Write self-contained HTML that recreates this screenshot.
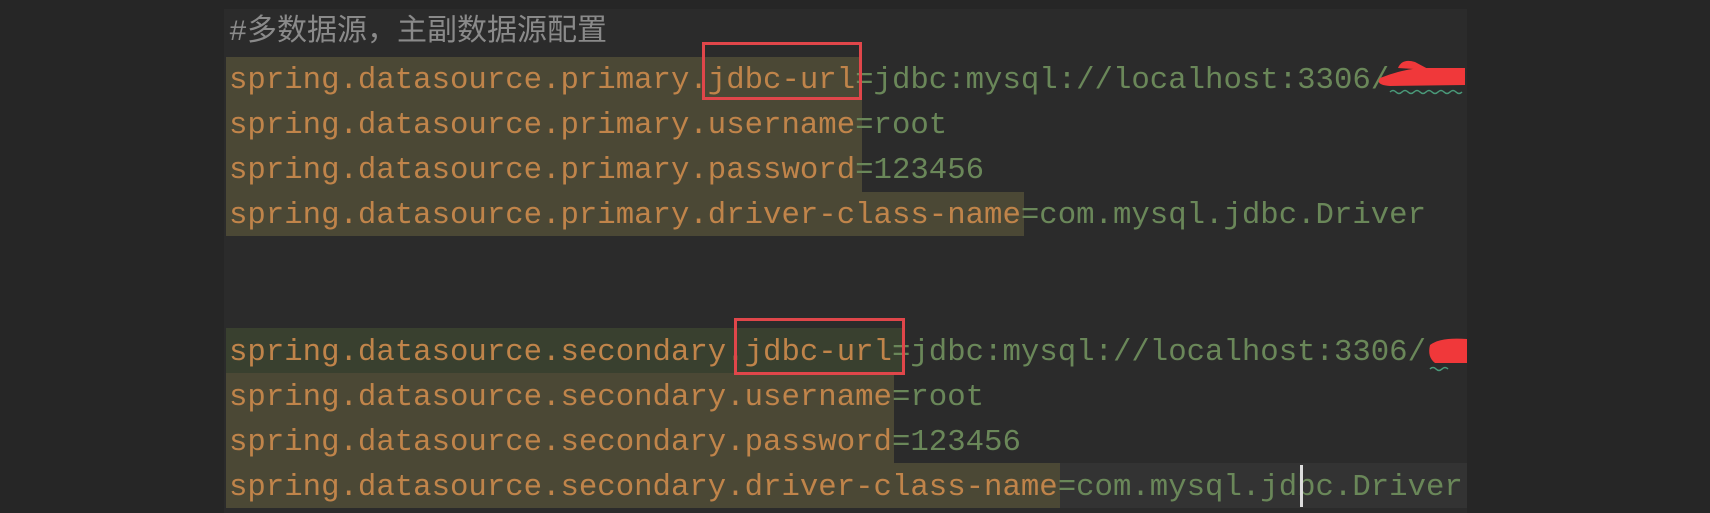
<!DOCTYPE html>
<html><head><meta charset="utf-8"><style>
body{margin:0;width:1710px;height:513px;background:#262626;overflow:hidden;position:relative}
.panel{position:absolute;left:224px;top:9px;width:1243px;height:504px;background:#2b2b2b}
.hl{position:absolute;background:#4b4835}
.l{position:absolute;left:229px;font-family:"Liberation Mono",monospace;font-size:30.7px;line-height:45px;height:45px;white-space:pre;color:#6a8759}
.k{color:#c0844a}
.c{position:absolute;left:229px;top:13px;font-family:"Liberation Mono","Noto Sans CJK SC",monospace;font-size:30px;color:#8a8a8a;line-height:40px}
.box{position:absolute;border:3px solid #e0464a;box-sizing:border-box}
</style></head><body>
<div class="panel"></div>
<div class="hl" style="left:226px;top:57px;width:636px;height:135px"></div>
<div class="hl" style="left:226px;top:192px;width:798px;height:44px"></div>
<div class="hl" style="left:226px;top:328px;width:676px;height:45px;background:#39402f"></div>
<div class="hl" style="left:226px;top:373px;width:668px;height:90px"></div>
<div class="hl" style="left:226px;top:463px;width:1241px;height:45px;background:#333333"></div>
<div class="hl" style="left:226px;top:463px;width:834px;height:45px"></div>
<div class="c">#多数据源，主副数据源配置</div>
<div class="l" style="top:58px"><span class="k">spring.datasource.primary.jdbc-url</span>=jdbc:mysql://localhost:3306/</div>
<div class="l" style="top:103px"><span class="k">spring.datasource.primary.username</span>=root</div>
<div class="l" style="top:148px"><span class="k">spring.datasource.primary.password</span>=123456</div>
<div class="l" style="top:193px"><span class="k">spring.datasource.primary.driver-class-name</span>=com.mysql.jdbc.Driver</div>
<div class="l" style="top:330px"><span class="k">spring.datasource.secondary.jdbc-url</span>=jdbc:mysql://localhost:3306/</div>
<div class="l" style="top:375px"><span class="k">spring.datasource.secondary.username</span>=root</div>
<div class="l" style="top:420px"><span class="k">spring.datasource.secondary.password</span>=123456</div>
<div class="l" style="top:465px"><span class="k">spring.datasource.secondary.driver-class-name</span>=com.mysql.jdbc.Driver</div>
<div style="position:absolute;left:1300px;top:465px;width:3px;height:42px;background:#ddd"></div>
<div class="box" style="left:702px;top:42px;width:160px;height:58px"></div>
<div class="box" style="left:734px;top:318px;width:171px;height:57px"></div>
<svg style="position:absolute;left:1360px;top:50px" width="110" height="45"><path d="M20 28 Q40 20 60 18 L105 18 L105 35 L30 36 Q15 35 20 28Z M38 18 Q42 8 55 12 L70 20Z" fill="#f0383a"/><path d="M30 42 q3-3 6 0 t6 0 t6 0 t6 0 t6 0 t6 0 t6 0 t6 0 t6 0 t6 0 t6 0 t6 0" stroke="#4a9a7a" fill="none" stroke-width="1.5"/></svg>
<svg style="position:absolute;left:1425px;top:333px" width="45" height="40"><path d="M5 12 Q15 4 42 6 L42 30 L10 30 Q2 24 5 12Z" fill="#f0383a"/><path d="M5 36 q3-3 6 0 t6 0 t6 0" stroke="#4a9a7a" fill="none" stroke-width="1.5"/></svg>
</body></html>
